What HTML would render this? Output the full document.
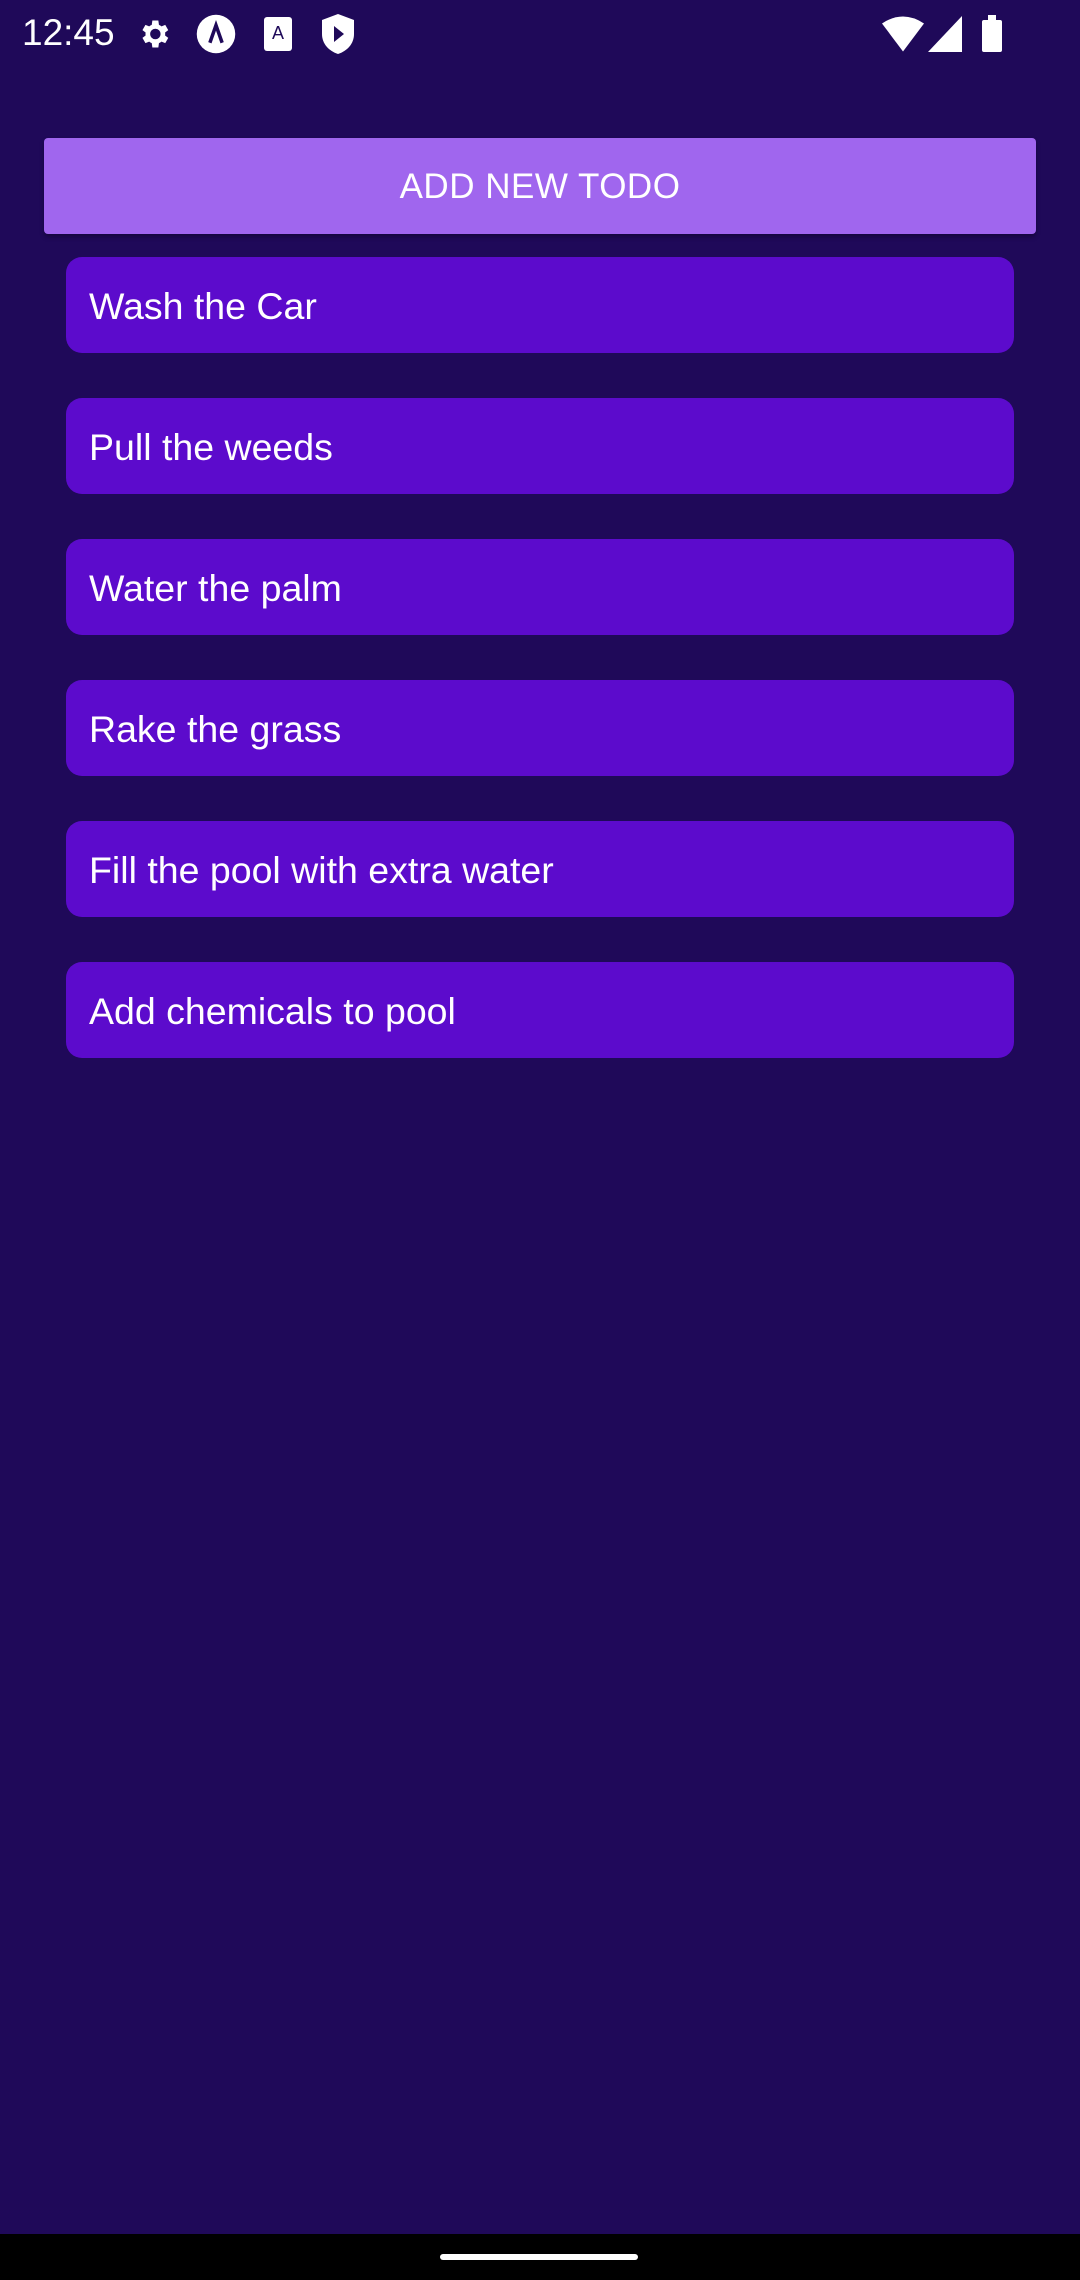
<!DOCTYPE html>
<html><head><style>
body{margin:0;width:1080px;height:2280px;background:#1f0959;font-family:"Liberation Sans",sans-serif;position:relative;overflow:hidden;color:#fff}
.sb{position:absolute;top:0;left:0;width:1080px;height:63px}
.time{position:absolute;left:22px;top:12px;font-size:37px}
.btn{position:absolute;left:44px;top:138px;width:992px;height:96px;background:#a066ee;border-radius:4px;display:flex;align-items:center;justify-content:center;font-size:35px;letter-spacing:0.5px;box-shadow:0 3px 5px rgba(0,0,0,.3);padding-top:2px;box-sizing:border-box}
.it{position:absolute;left:66px;width:948px;height:96px;background:#5c0bcc;border-radius:16px;font-size:37.5px;line-height:98px;padding-left:23px;box-sizing:border-box}
.nav{position:absolute;left:0;top:2234px;width:1080px;height:46px;background:#000}
.hi{position:absolute;left:440px;top:2254px;width:198px;height:6px;border-radius:3px;background:#fff}
</style></head><body>
<div class="sb">
<div class="time">12:45</div>
<svg style="position:absolute;left:136px;top:16px" width="36" height="36" viewBox="0 0 24 24"><path fill="#fff" d="M19.4 13a7.5 7.5 0 000-2l2.1-1.6-2-3.5-2.5 1a7 7 0 00-1.7-1L14.9 3h-4l-.4 2.9a7 7 0 00-1.7 1l-2.5-1-2 3.5L6.4 11a7.5 7.5 0 000 2l-2.1 1.6 2 3.5 2.5-1a7 7 0 001.7 1l.4 2.9h4l.4-2.9a7 7 0 001.7-1l2.5 1 2-3.5zM12.9 15.5a3.5 3.5 0 110-7 3.5 3.5 0 010 7z"/></svg>
<svg style="position:absolute;left:195px;top:13px" width="42" height="42" viewBox="0 0 24 24"><circle cx="12" cy="12" r="11" fill="#fff"/><path d="M8.5 17L12 7l3.5 10" stroke="#1f0959" stroke-width="2" fill="none"/></svg>
<svg style="position:absolute;left:264px;top:17px" width="28" height="34" viewBox="0 0 14 17"><rect width="14" height="17" rx="1.5" fill="#fff"/><text x="7" y="11" font-size="9" text-anchor="middle" fill="#1f0959" font-family="Liberation Sans">A</text></svg>
<svg style="position:absolute;left:322px;top:14px" width="32" height="40" viewBox="0 0 16 20"><path d="M8 0L16 3v7c0 5-3.5 8.5-8 10C3.5 18.5 0 15 0 10V3z" fill="#fff"/><path d="M6 6l5 4-5 4z" fill="#1f0959"/></svg>
<svg style="position:absolute;left:882px;top:16px" width="42" height="36" viewBox="0 0 24 20"><path d="M12 20L0 4Q12-4 24 4z" fill="#fff"/></svg>
<svg style="position:absolute;left:928px;top:16px" width="34" height="36" viewBox="0 0 17 18"><path d="M17 0v18H0z" fill="#fff"/></svg>
<div style="position:absolute;left:982px;top:20px;width:20px;height:32px;background:#fff;border-radius:2px"></div>
<div style="position:absolute;left:988px;top:15px;width:8px;height:6px;background:#fff"></div>
</div>
<div class="btn">ADD NEW TODO</div>
<div class="it" style="top:257px">Wash the Car</div>
<div class="it" style="top:398px">Pull the weeds</div>
<div class="it" style="top:539px">Water the palm</div>
<div class="it" style="top:680px">Rake the grass</div>
<div class="it" style="top:821px">Fill the pool with extra water</div>
<div class="it" style="top:962px">Add chemicals to pool</div>
<div class="nav"></div><div class="hi"></div>
</body></html>
